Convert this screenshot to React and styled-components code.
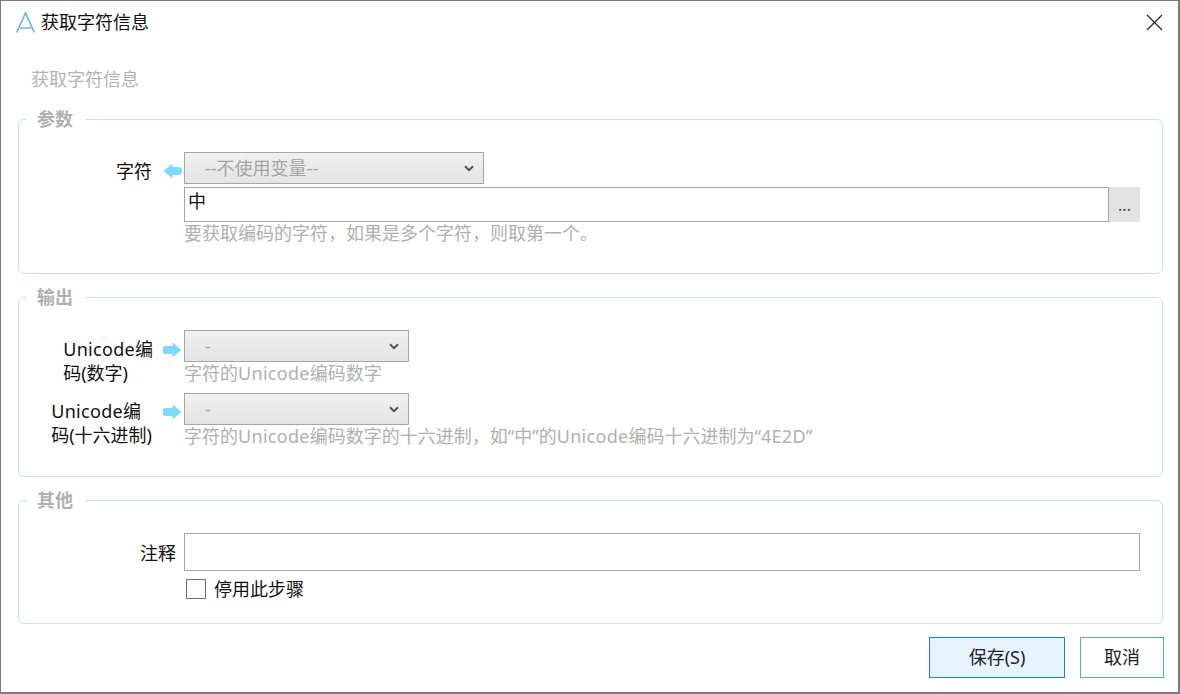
import React from 'react';
import styled, { createGlobalStyle } from 'styled-components';

const FONT = '"Noto Sans", "Noto Sans CJK SC", sans-serif';

const Global = createGlobalStyle`
  html, body { margin: 0; padding: 0; background: #fff; }
  body { font-family: ${FONT}; font-size: 18px; color: #111; }
  * { box-sizing: border-box; }
`;

const Win = styled.div`
  width: 1180px; height: 694px; background: #fff;
  border-top: 1px solid #7a7a7a; border-left: 1px solid #7a7a7a;
  border-right: 2px solid #7a7a7a; border-bottom: 2px solid #7a7a7a;
  display: flex; flex-direction: column; overflow: hidden;
`;
const TitleBar = styled.div`
  height: 42px; display: flex; align-items: center; flex: none;
  padding: 0 15px 0 15px; gap: 6px;
`;
const TitleText = styled.div`flex: 1; font-size: 18px; line-height: 24px; color: #111;`;
const Close = styled.button`
  border: 0; background: none; padding: 0; width: 17px; height: 17px; display: block;
`;
const Body = styled.div`
  flex: 1; padding: 0 15px 0 17px; display: flex; flex-direction: column;
`;
const Caption = styled.div`
  font-size: 18px; line-height: 24px; color: #b4b4b4; padding-left: 13px; margin-top: 24px; height: 24px;
`;
const Group = styled.fieldset`
  margin: ${p => p.$mt}px 0 0; padding: 0 22px 0 0; height: ${p => p.$h}px;
  border: 1px solid #d3dde7; border-radius: 6px; min-width: 0; flex: none;
  legend { margin-left: 8px; padding: 0 13px 0 10px; font-size: 18px; font-weight: 700; line-height: 24px; color: #b0b0b0; }
`;
const Rows = styled.div`
  display: flex; flex-direction: column; margin-top: ${p => p.$mt}px; gap: ${p => p.$gap || 0}px;
`;
const Row = styled.div`
  display: grid; grid-template-columns: 134px 31px 1fr; align-items: start;
`;
const Label = styled.div`
  grid-column: ${p => p.$span ? '1 / span 2' : '1'};
  justify-self: end; margin-top: ${p => p.$mt || 0}px; padding-right: ${p => p.$pr || 0}px;
  font-size: 18px; line-height: 24px; color: #111;
`;
const Lat = styled.span`letter-spacing: 0.3px;`;
const Arrow = styled.svg`
  width: 19px; height: 16px; margin: ${p => p.$mt}px 0 0 10px; display: block;
`;
const Field = styled.div`
  grid-column: 3; min-width: 0; display: flex; flex-direction: column;
`;
const Select = styled.div`
  width: ${p => p.$w}px; height: 32px; flex: none;
  border: 1px solid #a6a6a6;
  background: linear-gradient(#f1f1f1, #e4e4e4);
  display: flex; align-items: center; justify-content: space-between;
  padding: 0 9px 0 20px; color: #a3a3a3; font-size: 18px; line-height: 24px;
`;
const InputRow = styled.div`display: flex; margin-top: 3px;`;
const Input = styled.div`
  flex: 1 0 auto; height: ${p => p.$h}px; border: 1px solid #a6a6a6; background: #fff;
  padding: 0 3px 8px; display: flex; align-items: center; font-size: 18px; line-height: 24px; color: #111;
`;
const DotsBtn = styled.div`
  width: 31px; height: 35px; background: #e3e3e3; color: #444; flex: none;
  font-size: 16px; line-height: 24px; text-align: center; padding-top: 6px;
`;
const Help = styled.div`
  font-size: 18px; line-height: 24px; color: #b0b0b0; white-space: nowrap; margin-top: -1px;
`;
const CheckRow = styled.label`
  display: flex; align-items: center; gap: 8px; margin: 6px 0 0 2px; font-size: 18px; line-height: 24px; color: #111;
`;
const Box = styled.span`
  width: 20px; height: 20px; border: 1px solid #707070; background: #fff; display: block; flex: none;
`;
const Footer = styled.div`
  display: flex; justify-content: flex-end; gap: 15px; margin: 13px -1px 0 0;
`;
const Btn = styled.button`
  width: ${p => p.$w}px; height: 41px; font-family: ${FONT}; font-size: 18px; color: #222; padding: 0 0 3px;
  border: ${p => p.$primary ? '1px solid #1a80d0' : '1px solid #5aa6e2'};
  background: ${p => p.$primary ? '#e6f4ff' : '#fff'};
`;

const LeftArrow = () => (
  <Arrow viewBox="0 0 19 16" $mt={11}>
    <path d="M9.5 0.5 L0.5 8 L9.5 15.5 L9.5 12 L15 12 A4 4 0 0 0 15 4 L9.5 4 Z" fill="#7fd9ff" />
  </Arrow>
);
const RightArrow = ({ mt }) => (
  <Arrow viewBox="0 0 19 16" $mt={mt}>
    <path d="M9.5 0.5 L18.5 8 L9.5 15.5 L9.5 12 L3 12 A4 4 0 0 1 3 4 L9.5 4 Z" fill="#7fd9ff" />
  </Arrow>
);
const Chevron = () => (
  <svg width="10" height="7" viewBox="0 0 10 7">
    <path d="M1 1.2 L5 5.2 L9 1.2" fill="none" stroke="#505050" strokeWidth="2" />
  </svg>
);

export default function App() {
  return (
    <Win>
      <Global />
      <TitleBar>
        <svg width="19" height="22" viewBox="0 0 19 22">
          <path d="M0.7 21.5 L9.5 2 L18.3 21.5 M4 17 H15" fill="none" stroke="#6db2ee" strokeWidth="1.6" />
        </svg>
        <TitleText>获取字符信息</TitleText>
        <Close aria-label="关闭">
          <svg width="17" height="17" viewBox="0 0 17 17">
            <path d="M1 1 L16 16 M16 1 L1 16" stroke="#222" strokeWidth="1.2" fill="none" />
          </svg>
        </Close>
      </TitleBar>
      <Body>
        <Caption>获取字符信息</Caption>
        <Group $mt={16} $h={167}>
          <legend>参数</legend>
          <Rows $mt={21}>
            <Row>
              <Label $mt={7} $pr={1}>字符</Label>
              <LeftArrow />
              <Field>
                <Select $w={300}>--不使用变量--<Chevron /></Select>
                <InputRow>
                  <Input $h={35}>中</Input>
                  <DotsBtn>...</DotsBtn>
                </InputRow>
                <Help>要获取编码的字符，如果是多个字符，则取第一个。</Help>
              </Field>
            </Row>
          </Rows>
        </Group>
        <Group $mt={11} $h={192}>
          <legend>输出</legend>
          <Rows $mt={21} $gap={8}>
            <Row>
              <Label $mt={7}><Lat>Unicode</Lat>编<br />码(数字)</Label>
              <RightArrow mt={12} />
              <Field>
                <Select $w={225}>-<Chevron /></Select>
                <Help>字符的<Lat>Unicode</Lat>编码数字</Help>
              </Field>
            </Row>
            <Row>
              <Label $mt={6} $pr={1}><Lat>Unicode</Lat>编<br />码(十六进制)</Label>
              <RightArrow mt={11} />
              <Field>
                <Select $w={225}>-<Chevron /></Select>
                <Help>字符的<Lat>Unicode</Lat>编码数字的十六进制，如“中”的<Lat>Unicode</Lat>编码十六进制为“<Lat>4E2D</Lat>”</Help>
              </Field>
            </Row>
          </Rows>
        </Group>
        <Group $mt={11} $h={136}>
          <legend>其他</legend>
          <Rows $mt={21}>
            <Row>
              <Label $span $pr={8} $mt={8}>注释</Label>
              <Field>
                <Input $h={38}></Input>
                <CheckRow><Box />停用此步骤</CheckRow>
              </Field>
            </Row>
          </Rows>
        </Group>
        <Footer>
          <Btn $primary $w={136}>保存(S)</Btn>
          <Btn $w={84}>取消</Btn>
        </Footer>
      </Body>
    </Win>
  );
}
